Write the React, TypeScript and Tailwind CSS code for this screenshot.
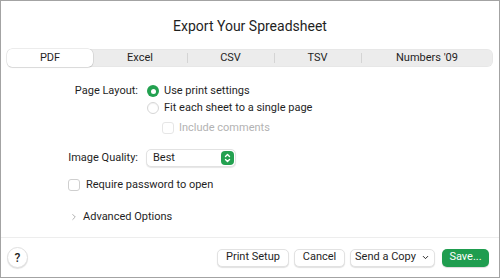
import React, { useState } from 'react';
import { ChevronRight, ChevronDown } from 'lucide-react';

const tabs = [
  { name: 'PDF', w: 'w-[86px]' },
  { name: 'Excel', w: 'w-[94px]' },
  { name: 'CSV', w: 'w-[87px]' },
  { name: 'TSV', w: 'w-[87px]' },
  { name: "Numbers '09", w: 'flex-1' },
];

const Radio = ({ on }: { on: boolean }) =>
  on ? (
    <span className="w-[12px] h-[12px] rounded-full bg-[#23a150] flex items-center justify-center">
      <span className="w-[5px] h-[5px] rounded-full bg-white" />
    </span>
  ) : (
    <span className="w-[12px] h-[12px] rounded-full border border-[#d6d6d6] bg-white shadow-[inset_0_1px_1px_rgba(0,0,0,0.05)]" />
  );

const Box = ({ faded }: { faded?: boolean }) => (
  <span
    className={`w-[12px] h-[12px] rounded-[3px] border bg-white ${
      faded ? 'border-[#e6e6e6]' : 'border-[#cfcfcf]'
    }`}
  />
);

const Btn = ({ children, className = '' }: { children: React.ReactNode; className?: string }) => (
  <div
    className={`h-[18px] flex-none whitespace-nowrap rounded-[5px] bg-white border border-[#e2e2e2] shadow-[0_1px_1px_rgba(0,0,0,0.12)] flex items-center justify-center text-[11px] text-[#1f1f1f] ${className}`}
  >
    {children}
  </div>
);

export default function App() {
  const [tab, setTab] = useState(0);

  return (
    <div className="w-[500px] h-[278px] bg-white border border-[#a3a3a3] flex flex-col font-['Roboto',sans-serif] text-[#1f1f1f] overflow-hidden">
      <h1 className="text-center text-[14px] mt-[15px] leading-[20px]">Export Your Spreadsheet</h1>

      {/* format tabs */}
      <div className="mx-[6px] mt-[13px] h-[18px] rounded-[6px] bg-[#ececec] flex items-center text-[11px] shadow-[inset_0_0_0_0.5px_rgba(0,0,0,0.04)]">
        {tabs.map((t, i) => (
          <button
            key={t.name}
            onClick={() => setTab(i)}
            className={`${t.w} h-full flex items-center justify-center relative ${
              tab === i ? 'bg-white rounded-[5px] shadow-[0_0_0_0.5px_rgba(0,0,0,0.15),0_1px_1px_rgba(0,0,0,0.08)]' : ''
            }`}
          >
            {t.name}
            {i > 1 && tab !== i && tab !== i - 1 && (
              <span className="absolute left-0 top-[4px] w-px h-[10px] bg-[#d4d4d4]" />
            )}
          </button>
        ))}
      </div>

      {/* page layout */}
      <div className="flex mt-[16px] text-[11px]">
        <div className="w-[138px] text-right pr-[1px] leading-[16px]">Page Layout:</div>
        <div className="ml-[8px] flex flex-col">
          <div className="flex items-center gap-[5px] h-[16px]">
            <Radio on />
            <span>Use print settings</span>
          </div>
          <div className="flex items-center gap-[5px] h-[16px] mt-[1px]">
            <Radio on={false} />
            <span>Fit each sheet to a single page</span>
          </div>
          <div className="flex items-center gap-[5px] h-[16px] mt-[4px] ml-[15px] text-[#b3b3b3]">
            <Box faded />
            <span>Include comments</span>
          </div>
        </div>
      </div>

      {/* image quality */}
      <div className="flex items-center mt-[13px] text-[11px]">
        <div className="w-[138px] text-right pr-[1px]">Image Quality:</div>
        <div className="ml-[7px] w-[90px] h-[18px] rounded-[5px] bg-white border border-[#e2e2e2] shadow-[0_1px_1px_rgba(0,0,0,0.1)] flex items-center justify-between pl-[6px] pr-[1px]">
          <span>Best</span>
          <span className="w-[13px] h-[14px] rounded-[4px] bg-[#23a150] flex items-center justify-center">
            <svg width="7" height="10" viewBox="0 0 7 10" fill="none" stroke="white" strokeWidth="1.4" strokeLinecap="round" strokeLinejoin="round">
              <path d="M1.5 3.5 3.5 1.5 5.5 3.5" />
              <path d="M1.5 6.5 3.5 8.5 5.5 6.5" />
            </svg>
          </span>
        </div>
      </div>

      <div className="flex items-center gap-[6px] ml-[67px] mt-[10px] text-[11px]">
        <Box />
        <span>Require password to open</span>
      </div>

      <div className="flex items-center gap-[4px] ml-[68px] mt-[15px] text-[11px]">
        <ChevronRight size={10} strokeWidth={2} className="text-[#a0a0a0]" />
        <span>Advanced Options</span>
      </div>

      {/* footer */}
      <div className="mt-auto border-t border-[#ededed] h-[40px] flex items-center px-[6px]">
        <div className="w-[21px] h-[21px] rounded-full bg-white border border-[#e0e0e0] shadow-[0_1px_1px_rgba(0,0,0,0.12)] flex items-center justify-center text-[12px] font-medium">
          ?
        </div>
        <div className="ml-auto flex items-center gap-[5px] mr-[4px]">
          <Btn className="w-[72px]">Print Setup</Btn>
          <Btn className="w-[51px]">Cancel</Btn>
          <Btn className="w-[85px] gap-[5px]">
            Send a Copy
            <ChevronDown size={9} strokeWidth={2.5} />
          </Btn>
          <div className="ml-[2px] w-[47px] h-[18px] flex-none whitespace-nowrap rounded-[5px] bg-[#1f9d4f] text-white text-[11px] flex items-center justify-center shadow-[0_1px_1px_rgba(0,0,0,0.15)]">
            Save...
          </div>
        </div>
      </div>
    </div>
  );
}
